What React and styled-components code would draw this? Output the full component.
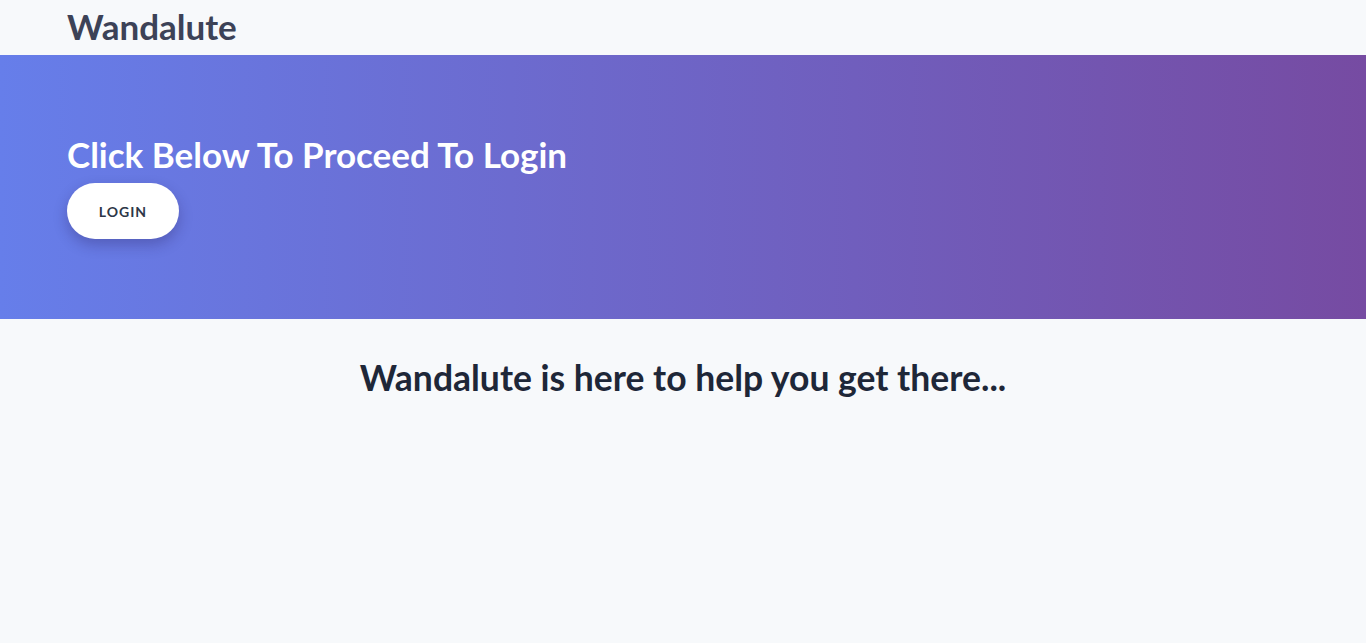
import styled, { createGlobalStyle } from "styled-components";

const GlobalStyle = createGlobalStyle`
  html, body {
    margin: 0;
    padding: 0;
    background: #f7f9fb;
    font-family: "Lato", "Noto Sans", sans-serif;
  }
  *, *::before, *::after {
    box-sizing: border-box;
  }
`;

const Container = styled.div`
  width: 100%;
  max-width: 1280px;
  margin: 0 auto;
  padding: 0 24px;
`;

const Header = styled.header`
  height: 55px;
  display: flex;
  align-items: flex-start;
`;

const Brand = styled.h1`
  margin: 0;
  padding-top: 6px;
  font-size: 35px;
  line-height: 40px;
  font-weight: 700;
  color: #3c4257;
`;

const Banner = styled.section`
  height: 264px;
  background: linear-gradient(90deg, #667eea 0%, #764ba2 100%);
  display: flex;
  align-items: flex-start;
`;

const BannerInner = styled(Container)`
  padding-top: 79px;
`;

const BannerTitle = styled.h2`
  margin: 0 0 9px;
  font-size: 35px;
  line-height: 40px;
  font-weight: 700;
  color: #ffffff;
`;

const LoginButton = styled.button`
  width: 112px;
  height: 56px;
  border: none;
  border-radius: 28px;
  background: #ffffff;
  color: #2d3748;
  font-family: inherit;
  font-size: 14px;
  font-weight: 700;
  letter-spacing: 1px;
  box-shadow: 0 6px 14px rgba(40, 30, 90, 0.3);
  cursor: pointer;
`;

const Tagline = styled.h3`
  margin: 37px 0 0;
  text-align: center;
  font-size: 35.5px;
  line-height: 44px;
  font-weight: 700;
  color: #1e2738;
`;

export default function App() {
  return (
    <>
      <GlobalStyle />
      <Container>
        <Header>
          <Brand>Wandalute</Brand>
        </Header>
      </Container>
      <Banner>
        <BannerInner>
          <BannerTitle>Click Below To Proceed To Login</BannerTitle>
          <LoginButton>LOGIN</LoginButton>
        </BannerInner>
      </Banner>
      <Tagline>Wandalute is here to help you get there...</Tagline>
    </>
  );
}
